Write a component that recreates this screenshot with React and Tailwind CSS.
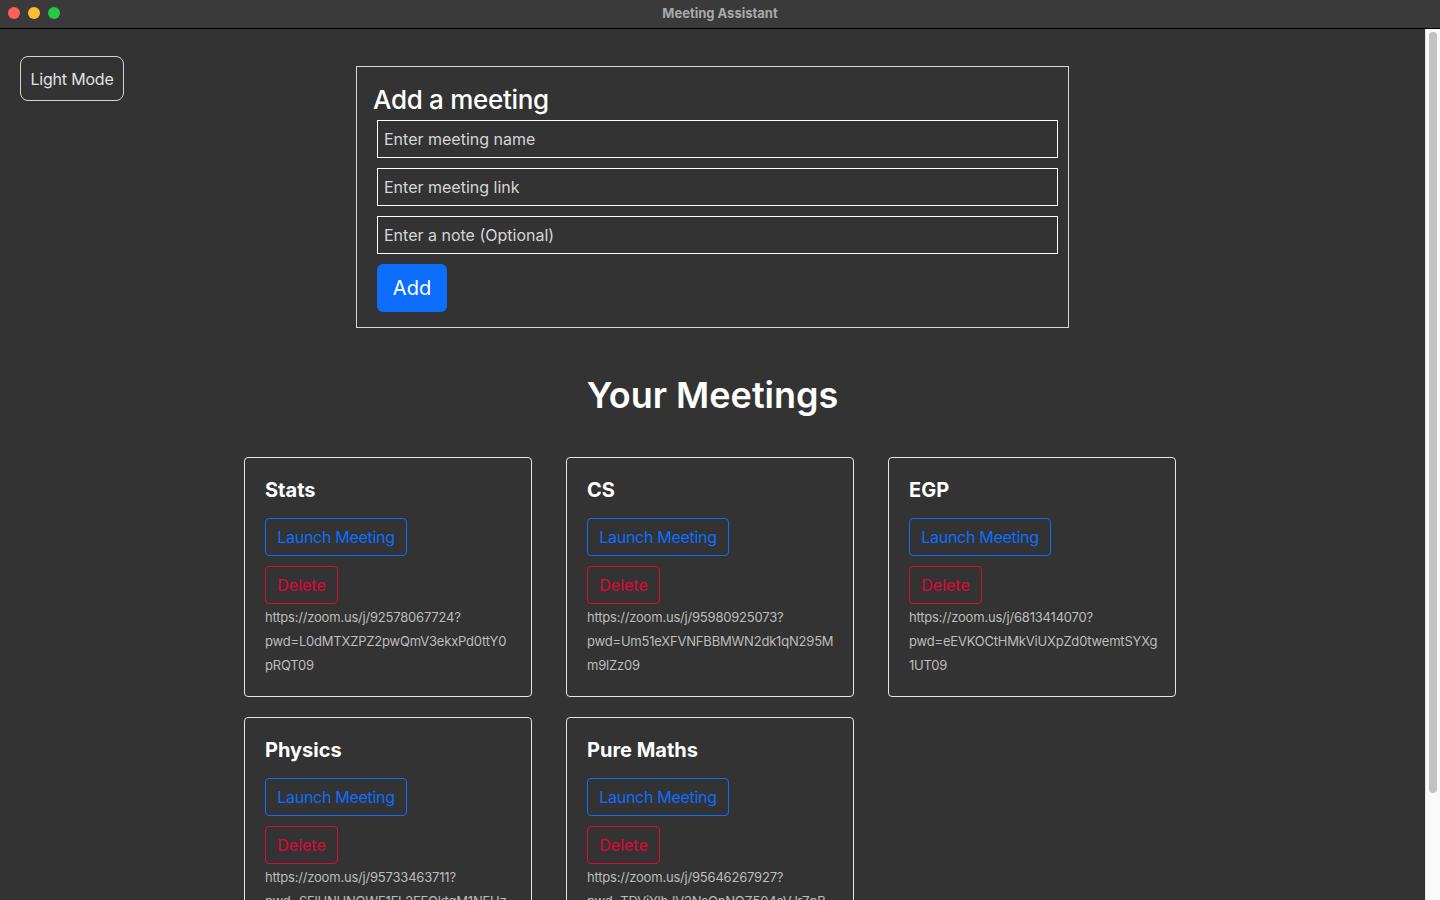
import React from 'react';

// Enlaces partidos en líneas como en la ventana original
const meetings = [
  { name: 'Stats', lines: ['https://zoom.us/j/92578067724?', 'pwd=L0dMTXZPZ2pwQmV3ekxPd0ttY0', 'pRQT09'] },
  { name: 'CS', lines: ['https://zoom.us/j/95980925073?', 'pwd=Um51eXFVNFBBMWN2dk1qN295M', 'm9lZz09'] },
  { name: 'EGP', lines: ['https://zoom.us/j/6813414070?', 'pwd=eEVKOCtHMkViUXpZd0twemtSYXg', '1UT09'] },
  { name: 'Physics', lines: ['https://zoom.us/j/95733463711?', 'pwd=SFlHNUNOWE1FL2FFOktqM1NFUz', 'ZkUT09'] },
  { name: 'Pure Maths', lines: ['https://zoom.us/j/95646267927?', 'pwd=TDViYlhJV2NsQnNOZ504aVJrZnB', 'pdz09'] },
];

// Barra de título estilo macOS
const TitleBar = () => (
  <div className="relative h-[29px] shrink-0 bg-[#3a3a3a] border-b border-black flex items-center justify-center">
    <div className="absolute left-[8px] top-[7px] flex gap-[8px]">
      <span className="w-[12px] h-[12px] rounded-full bg-[#ff5f57]" />
      <span className="w-[12px] h-[12px] rounded-full bg-[#febc2e]" />
      <span className="w-[12px] h-[12px] rounded-full bg-[#28c840]" />
    </div>
    <span className="text-[13px] font-bold text-[#a9a9a9] -mt-[1px]">Meeting Assistant</span>
  </div>
);

const MeetingCard = ({ meeting }) => (
  <div className="w-[288px] h-[240px] border border-[#e6e6e6] rounded-[4px] px-[20px] pt-[20px] pb-[20px]">
    <h5 className="text-[20px] leading-[24px] font-bold text-white">{meeting.name}</h5>
    <button className="mt-[16px] h-[38px] w-[142px] border border-[#0d6efd] rounded-[4px] text-[16px] tracking-[-0.3px] text-[#0d6efd] block">
      Launch Meeting
    </button>
    <button className="mt-[10px] h-[38px] w-[73px] border border-[#dc0a38] rounded-[4px] text-[16px] text-[#e0063a] block">
      Delete
    </button>
    <p className="mt-[1px] text-[13px] leading-[24px] tracking-[-0.2px] text-[#bdbdbd]">
      {meeting.lines.map(l => (
        <span key={l} className="block whitespace-nowrap">{l}</span>
      ))}
    </p>
  </div>
);

const App = () => {
  return (
    <div className="h-screen w-full flex flex-col overflow-hidden bg-[#333333] font-['Inter',sans-serif]">
      <TitleBar />
      <div className="flex-1 flex min-h-0">
        <main className="relative flex-1 overflow-hidden">
          {/* Botón de tema */}
          <button className="absolute top-[27px] left-[20px] h-[45px] w-[104px] border border-[#d4d4d4] rounded-[8px] text-[16px] tracking-[-0.2px] text-[#e2e2e2]">
            Light Mode
          </button>

          {/* Formulario */}
          <div className="mx-auto mt-[37px] w-[713px] border border-[#d8d8d8] pl-[16px] pt-[17px] pb-[15px]">
            <h2 className="text-[26px] leading-[31px] font-medium tracking-[-0.3px] text-white">Add a meeting</h2>
            <div className="ml-[4px] mt-[5px] flex flex-col gap-[10px]">
              <input
                placeholder="Enter meeting name"
                className="w-[681px] h-[38px] border border-white bg-transparent px-[6px] text-[16px] text-white placeholder:text-[#d6d6d6] outline-none"
              />
              <input
                placeholder="Enter meeting link"
                className="w-[681px] h-[38px] border border-white bg-transparent px-[6px] text-[16px] text-white placeholder:text-[#d6d6d6] outline-none"
              />
              <input
                placeholder="Enter a note (Optional)"
                className="w-[681px] h-[38px] border border-white bg-transparent px-[6px] text-[16px] text-white placeholder:text-[#d6d6d6] outline-none"
              />
              <button className="w-[70px] h-[48px] rounded-[6px] bg-[#0d6efd] text-[20px] text-white">Add</button>
            </div>
          </div>

          <h1 className="mt-[46px] text-center text-[36px] leading-[43px] font-semibold text-white">Your Meetings</h1>

          {/* Tarjetas */}
          <div className="mt-[40px] flex justify-center pr-[5px]">
            <div className="grid grid-cols-[288px_288px_288px] gap-x-[34px] gap-y-[20px]">
              {meetings.map(m => (
                <MeetingCard key={m.name} meeting={m} />
              ))}
            </div>
          </div>
        </main>

        {/* Barra de desplazamiento */}
        <div className="w-[15px] shrink-0 bg-[#fafafa] border-l border-[#e4e4e4] pt-[3px] pl-[3px]">
          <div className="w-[8px] h-[761px] rounded-full bg-[#c2c2c2]" />
        </div>
      </div>
    </div>
  );
};

export default App;
